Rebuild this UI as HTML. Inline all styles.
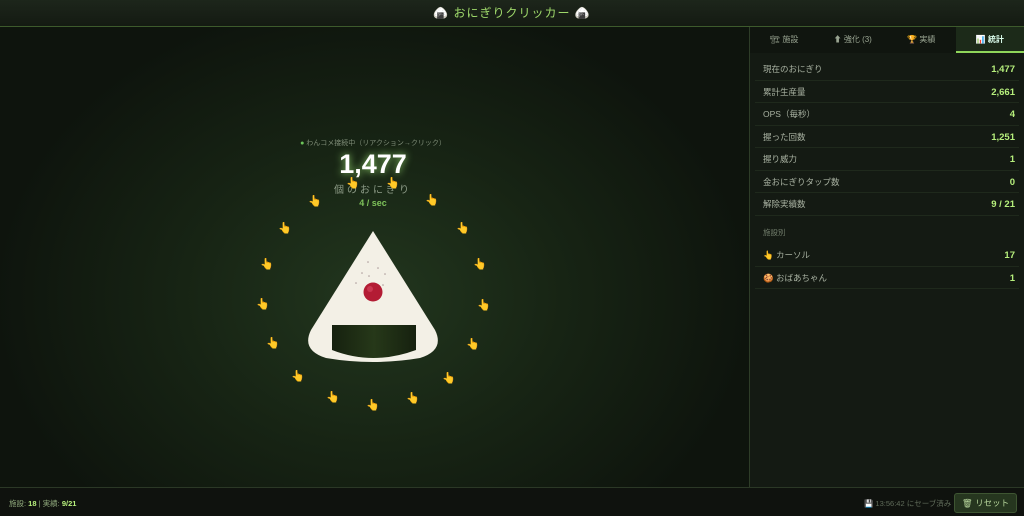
<!DOCTYPE html><html><head><meta charset="utf-8"><style>
*{margin:0;padding:0;box-sizing:border-box}
body{width:1024px;height:516px;overflow:hidden;background:#0f130e;font-family:"Liberation Sans","Noto Sans CJK JP",sans-serif;position:relative}
.hdr{position:absolute;left:0;top:0;width:1024px;height:27px;background:linear-gradient(#1d261b,#141a12);border-bottom:1px solid #3d5a2c;text-align:center;color:#9ed86a;font-size:12px;line-height:27px;letter-spacing:1px}
.main{position:absolute;left:0;top:27px;width:749px;height:460px;background:radial-gradient(ellipse 380px 300px at 373px 270px,#22361e 0%,#172414 50%,#0e140d 100%)}
.side{position:absolute;left:749px;top:27px;width:275px;height:460px;background:#141a13;border-left:1px solid #2e3d28}
.tabs{display:flex;height:26px;background:#10150f}
.tab{flex:1;text-align:center;font-size:8px;color:#9aa592;line-height:26px}
.tab.on{background:#1c2a19;color:#dfe;border-bottom:2px solid #8fd55a;font-weight:bold}
.row{position:relative;margin:0 5px;height:22.5px;border-bottom:1px solid #1f291c;font-size:8.5px;color:#a9b2a2;line-height:22px;padding-left:8px}
.row b{position:absolute;right:4px;top:1px;line-height:22px;color:#b6ef7c;font-size:9.5px;font-weight:900}
.ft{position:absolute;left:0;top:487px;width:1024px;height:29px;background:#0f120e;border-top:1px solid #2b3826;font-size:7.5px;color:#8da67a}
.cur{position:absolute;font-size:11px;color:#f2c04a;transform:translate(-50%,-50%)}
</style></head><body>
<div class="hdr">🍙 おにぎりクリッカー 🍙</div>
<div class="main">
<div style="position:absolute;left:0;width:746px;top:111px;text-align:center;font-size:7px;color:#7f8d78"><span style="color:#6cc45a">●</span> わんコメ接続中（リアクション→クリック）</div>
<div style="position:absolute;left:0;width:746px;top:122px;text-align:center;font-size:27px;font-weight:900;color:#fff;text-shadow:0 0 8px #8fcf6a">1,477</div>
<div style="position:absolute;left:0;width:746px;top:154px;text-align:center;font-size:10px;color:#8c9a86;letter-spacing:3px">個のおにぎり</div>
<div style="position:absolute;left:0;width:746px;top:171px;text-align:center;font-size:9px;font-weight:bold;color:#7ec25a">4 / sec</div>
<svg style="position:absolute;left:300px;top:200px" width="150" height="140" viewBox="300 227 150 140">
<defs><linearGradient id="n" x1="0" x2="1"><stop offset="0" stop-color="#16210f"/><stop offset=".5" stop-color="#263819"/><stop offset="1" stop-color="#16210f"/></linearGradient></defs>
<path d="M373 231 L435 330 Q445 350 420 358 Q373 366 326 358 Q301 350 311 330 Z" fill="#f3f0e6"/>
<path d="M332 325 H416 V350 Q373 366 332 350 Z" fill="url(#n)"/>
<circle cx="373" cy="292" r="9.5" fill="#b31c34"/><circle cx="370" cy="289" r="3" fill="#e0506a" opacity=".5"/>
<g fill="#a99">
<circle cx="368" cy="262" r=".8"/><circle cx="378" cy="268" r=".8"/><circle cx="362" cy="273" r=".8"/><circle cx="385" cy="274" r=".8"/><circle cx="356" cy="283" r=".8"/><circle cx="383" cy="285" r=".8"/><circle cx="369" cy="276" r=".8"/></g>
</svg>
<div class="cur" style="left:353px;top:156px">👆</div><div class="cur" style="left:393px;top:156px">👆</div>
<div class="cur" style="left:432px;top:173px">👆</div><div class="cur" style="left:463px;top:201px">👆</div>
<div class="cur" style="left:480px;top:237px">👆</div><div class="cur" style="left:484px;top:278px">👆</div>
<div class="cur" style="left:473px;top:317px">👆</div><div class="cur" style="left:449px;top:351px">👆</div>
<div class="cur" style="left:413px;top:371px">👆</div><div class="cur" style="left:373px;top:378px">👆</div>
<div class="cur" style="left:333px;top:370px">👆</div><div class="cur" style="left:298px;top:349px">👆</div>
<div class="cur" style="left:273px;top:316px">👆</div><div class="cur" style="left:263px;top:277px">👆</div>
<div class="cur" style="left:267px;top:237px">👆</div><div class="cur" style="left:285px;top:201px">👆</div>
<div class="cur" style="left:315px;top:174px">👆</div>
</div>
<div class="side">
<div class="tabs"><div class="tab">🏗 施設</div><div class="tab">⬆ 強化 (3)</div><div class="tab">🏆 実績</div><div class="tab on">📊 統計</div></div>
<div style="height:5px"></div>
<div class="row">現在のおにぎり<b>1,477</b></div>
<div class="row">累計生産量<b>2,661</b></div>
<div class="row">OPS（毎秒）<b>4</b></div>
<div class="row">握った回数<b>1,251</b></div>
<div class="row">握り威力<b>1</b></div>
<div class="row">金おにぎりタップ数<b>0</b></div>
<div class="row">解除実績数<b>9 / 21</b></div>
<div style="height:6px"></div>
<div class="row" style="font-size:7.5px;color:#6f7b69;border:none">施設別</div>
<div class="row">👆 カーソル<b>17</b></div>
<div class="row">🍪 おばあちゃん<b>1</b></div>
</div>
<div class="ft">
<div style="position:absolute;left:9px;top:10px">施設: <b style="color:#b6ef7c">18</b> | 実績: <b style="color:#b6ef7c">9/21</b></div>
<div style="position:absolute;left:864px;top:10px;color:#5f6b59">💾 13:56:42 にセーブ済み</div>
<div style="position:absolute;left:954px;top:5px;width:63px;height:20px;background:#26361f;border:1px solid #3e5532;border-radius:3px;color:#b7d69c;font-size:8.5px;text-align:center;line-height:18px">🗑 リセット</div>
</div>
</body></html>
